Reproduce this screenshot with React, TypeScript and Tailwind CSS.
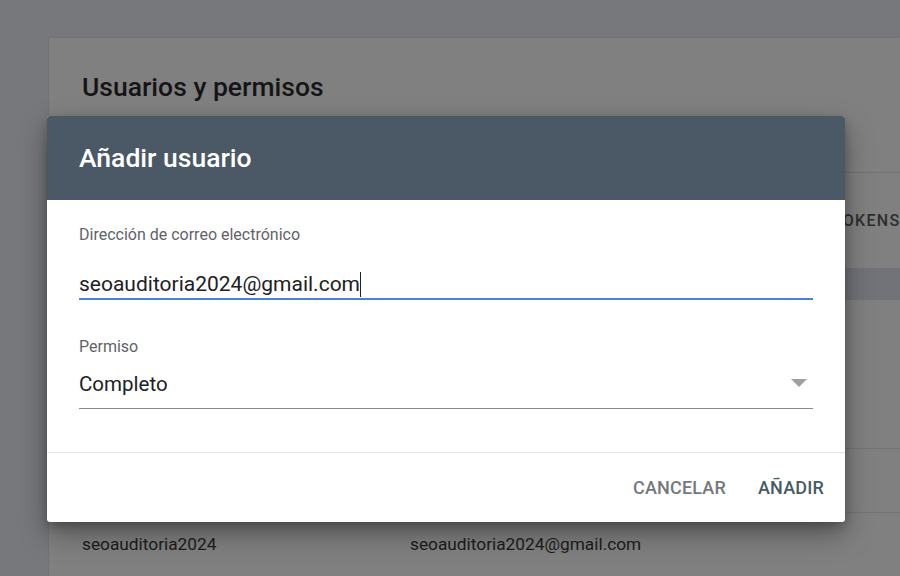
function BackgroundPage() {
  return (
    <div className="pt-[38px] pl-[49px]">
      <div className="bg-[#808080] shadow-[0_0_2px_rgba(0,0,0,0.15)]">
        {/* Header */}
        <div className="h-[134px] pl-[33px] pt-[31px]">
          <h1 className="text-[26.5px] leading-[36px] font-medium text-[#151515]">
            Usuarios y permisos
          </h1>
        </div>

        {/* Tabs */}
        <div className="h-[96px] border-t border-[#737373] flex items-center pl-[783px] shadow-[0_2px_3px_rgba(0,0,0,0.25)]">
          <span className="text-[16px] font-medium tracking-[0.08em] text-[#2e2e2e]">TOKENS</span>
        </div>
        <div className="h-[32px] bg-[#727379]" />

        {/* Rows */}
        <div className="h-[148px]" />
        <div className="h-[64px] border-t border-[#737373]" />
        <div className="h-[64px] border-t border-[#737373] flex items-center pl-[33px] text-[17.3px] text-[#1c1c1c]">
          <span className="w-[328px]">seoauditoria2024</span>
          <span>seoauditoria2024@gmail.com</span>
        </div>
      </div>
    </div>
  );
}

function AddUserDialog() {
  return (
    <div className="absolute left-[47px] top-[116px] w-[798px] h-[406px] bg-white rounded-[3px] overflow-hidden shadow-[0_12px_28px_rgba(0,0,0,0.35),0_4px_10px_rgba(0,0,0,0.2)] flex flex-col">
      <div className="h-[84px] bg-[#4a5965] flex items-center px-[32px]">
        <h2 className="text-[26.5px] font-medium text-white">Añadir usuario</h2>
      </div>

      <div className="flex-1 px-[32px] pt-[25px]">
        {/* Email */}
        <label className="block text-[16px] leading-[20px] text-[#5f6368]">
          Dirección de correo electrónico
        </label>
        <div className="mt-[25px] h-[30px] border-b-2 border-[#4a7fdc] flex items-start">
          <span className="text-[21px] leading-[28px] text-[#202124]">seoauditoria2024@gmail.com</span>
          <span className="w-px h-[25px] mt-[2px] bg-[#202124]" />
        </div>

        {/* Permiso */}
        <label className="block mt-[37px] text-[16px] leading-[20px] text-[#5f6368]">
          Permiso
        </label>
        <div className="mt-[13px] h-[39px] border-b border-[#8a8a8a] flex items-start justify-between">
          <span className="text-[20.5px] leading-[28px] text-[#202124]">Completo</span>
          <svg width="16" height="8" viewBox="0 0 16 8" className="mt-[9px] mr-[6px]">
            <path d="M0 0 H16 L8 8 Z" fill="#a0a0a0" />
          </svg>
        </div>
      </div>

      <div className="h-[70px] border-t border-[#e3e3e3] flex items-center justify-end gap-[32px] pr-[21px]">
        <button className="text-[18px] font-medium tracking-[0.01em] text-[#75797d]">CANCELAR</button>
        <button className="text-[18px] font-medium tracking-[0.01em] text-[#455a64]">AÑADIR</button>
      </div>
    </div>
  );
}

export default function App() {
  return (
    <div
      className="relative h-[576px] w-[900px] overflow-hidden bg-[#77787c]"
      style={{ fontFamily: "Roboto, 'Noto Sans', sans-serif" }}
    >
      <BackgroundPage />
      <AddUserDialog />
    </div>
  );
}
